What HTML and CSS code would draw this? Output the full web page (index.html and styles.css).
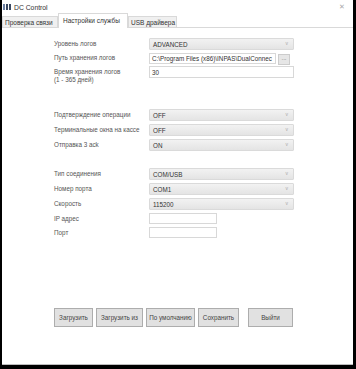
FILE: index.html
```html
<!DOCTYPE html>
<html lang="ru">
<head>
  <meta charset="UTF-8">
  <title>DC Control</title>
  <link rel="stylesheet" href="styles.css">
</head>
<body>
  <div class="window">
    <!-- заголовок окна -->
    <div class="titlebar">
      <span class="app-icon"><i></i><i></i><i></i></span>
      <span class="title">DC Control</span>
      <span class="close">✕</span>
    </div>

    <!-- вкладки -->
    <div class="tabs">
      <div class="tab">Проверка связи</div>
      <div class="tab active">Настройки службы</div>
      <div class="tab">USB драйвера</div>
    </div>

    <div class="page">
      <div class="group g1">
        <div class="row">
          <label>Уровень логов</label>
          <div class="select wide">ADVANCED</div>
        </div>
        <div class="row">
          <label>Путь хранения логов</label>
          <div class="input path">C:\Program Files (x86)\INPAS\DualConnec</div>
          <div class="dots">...</div>
        </div>
        <div class="row tall">
          <label>Время хранения логов<br>(1 - 365 дней)</label>
          <div class="input wide">30</div>
        </div>
      </div>

      <div class="group g2">
        <div class="row">
          <label>Подтверждение операции</label>
          <div class="select wide">OFF</div>
        </div>
        <div class="row">
          <label>Терминальные окна на кассе</label>
          <div class="select wide">OFF</div>
        </div>
        <div class="row">
          <label>Отправка 3 ack</label>
          <div class="select wide">ON</div>
        </div>
      </div>

      <div class="group g3">
        <div class="row">
          <label>Тип соединения</label>
          <div class="select wide">COM/USB</div>
        </div>
        <div class="row">
          <label>Номер порта</label>
          <div class="select wide">COM1</div>
        </div>
        <div class="row">
          <label>Скорость</label>
          <div class="select wide">115200</div>
        </div>
        <div class="row short">
          <label>IP адрес</label>
          <div class="input small"></div>
        </div>
        <div class="row short">
          <label>Порт</label>
          <div class="input small"></div>
        </div>
      </div>

      <div class="buttons">
        <button class="b1">Загрузить</button>
        <button class="b2">Загрузить из</button>
        <button class="b3">По умолчанию</button>
        <button class="b4">Сохранить</button>
        <button class="b5">Выйти</button>
      </div>
    </div>
  </div>
</body>
</html>
```

FILE: styles.css
```css
* { box-sizing: border-box; }
body {
  margin: 0;
  background: #000;
  font-family: 'Liberation Sans', Arial, sans-serif;
  font-size: 6.3px;
  color: #444;
  width: 356px;
  height: 369px;
  overflow: hidden;
}
.window {
  margin-left: 2px;
  width: 351px;
  height: 365px;
  background: #fff;
  border-bottom: 1px solid #bdbdbd;
  display: flex;
  flex-direction: column;
}

/* -------- заголовок -------- */
.titlebar {
  height: 14px;
  display: flex;
  align-items: center;
  padding-left: 1px;
}
.app-icon {
  display: flex;
  gap: 1px;
  width: 8px;
  height: 6px;
}
.app-icon i {
  flex: 1;
  background: #3b4a63;
}
.app-icon i:first-child { background: #6a7fa3; }
.title {
  margin-left: 3px;
  font-size: 6.8px;
  color: #333;
}
.close {
  margin-left: auto;
  margin-right: 8px;
  font-size: 7px;
  color: #aaa;
}

/* -------- вкладки -------- */
.tabs {
  height: 14px;
  display: flex;
  align-items: flex-end;
  border-bottom: 1px solid #d9d9d9;
}
.tab {
  height: 11px;
  padding: 0 2px;
  display: flex;
  align-items: center;
  font-size: 6.5px;
  white-space: nowrap;
  color: #333;
  background: #f0f0f0;
  border: 1px solid #d9d9d9;
  border-bottom: none;
}
.tab:first-child { width: 56px; }
.tab.active {
  width: 70px;
  height: 15px;
  padding-left: 4px;
  padding-bottom: 2px;
  background: #fff;
  margin-bottom: -1px;
}
.tab:last-child { width: 49px; }

/* -------- форма -------- */
.page {
  padding-left: 52px;
  padding-top: 10px;
  display: flex;
  flex-direction: column;
}
.group {
  display: flex;
  flex-direction: column;
}
.g1 { gap: 2px; }
.g2 { gap: 3px; margin-top: 31px; }
.g3 { gap: 3px; margin-top: 17px; }
.row {
  display: flex;
  align-items: center;
  height: 12px;
}
.row.short { height: 11px; }
.row label {
  width: 95px;
  color: #555;
  line-height: 8px;
  white-space: nowrap;
}
.row.tall label { margin-top: 8px; }

.select {
  height: 100%;
  display: flex;
  align-items: center;
  padding-left: 3px;
  color: #333;
  background: linear-gradient(#f2f2f2, #e4e4e4);
  border: 1px solid #dadada;
  border-radius: 1px;
  position: relative;
}
.select::after {
  content: "v";
  position: absolute;
  right: 5px;
  top: 1px;
  font-size: 5px;
  color: #aaa;
}
.wide { width: 145px; }

.input {
  height: 100%;
  display: flex;
  align-items: center;
  padding-left: 2px;
  background: #fff;
  border: 1px solid #d8d8d8;
  color: #333;
  white-space: nowrap;
  overflow: hidden;
}
.path { width: 127px; height: 11px; }
.small { width: 68px; }
.dots {
  width: 12px;
  height: 11px;
  margin-left: 2px;
  margin-top: 3px;
  background: #e6e6e6;
  border: 1px solid #cccccc;
  color: #666;
  font-size: 6px;
  text-align: center;
  line-height: 6px;
}

/* -------- кнопки -------- */
.buttons {
  display: flex;
  gap: 3px;
  margin-top: 70px;
}
.buttons button {
  height: 19px;
  padding: 0;
  font-family: inherit;
  font-size: 6.3px;
  color: #444;
  background: #e1e1e1;
  border: 1px solid #adadad;
}
.b1 { width: 39px; }
.b2 { width: 47px; }
.b3 { width: 49px; }
.b4 { width: 41px; }
.b5 { width: 45px; margin-left: 6px; }
```
